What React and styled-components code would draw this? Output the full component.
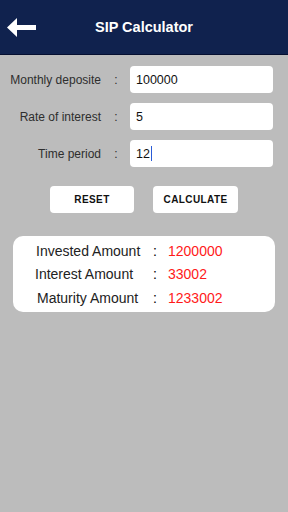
import React from 'react';
import styled, { createGlobalStyle } from 'styled-components';

const GlobalStyle = createGlobalStyle`
  html, body {
    margin: 0;
    padding: 0;
    background: #bcbcbc;
  }
  body {
    font-family: "Liberation Sans", Arial, sans-serif;
  }
`;

const Screen = styled.div`
  width: 288px;
  height: 512px;
  background: #bcbcbc;
  overflow: hidden;
`;

const Header = styled.div`
  height: 54px;
  background: #10224e;
  border-bottom: 1px solid #050f30;
  display: flex;
  align-items: center;
  position: relative;
`;

const BackButton = styled.div`
  width: 30px;
  height: 19px;
  margin-left: 7px;
  display: flex;
`;

const Title = styled.h1`
  position: absolute;
  left: 0;
  right: 0;
  margin: 0;
  text-align: center;
  color: #fff;
  font-size: 14.5px;
  font-weight: 700;
  pointer-events: none;
`;

const Form = styled.div`
  padding-top: 11px;
  display: flex;
  flex-direction: column;
  gap: 10px;
`;

const Row = styled.div`
  display: grid;
  grid-template-columns: 101px 29px 143px;
  align-items: center;
  height: 27px;
`;

const Label = styled.span`
  text-align: right;
  font-size: 12px;
  color: #2e2e2e;
`;

const Colon = styled.span`
  text-align: center;
  font-size: 12px;
  color: #2e2e2e;
  padding-left: 1px;
`;

const Field = styled.div`
  height: 27px;
  background: #fff;
  border-radius: 4px;
  display: flex;
  align-items: center;
  padding-left: 6px;
  font-size: 12.5px;
  color: #111;
  box-sizing: border-box;
`;

const Caret = styled.span`
  display: inline-block;
  width: 1px;
  height: 15px;
  background: #2a5bd7;
  margin-left: 1px;
`;

const Buttons = styled.div`
  display: flex;
  gap: 19px;
  padding-left: 50px;
  margin-top: 19px;
`;

const Button = styled.button`
  width: ${p => p.$w}px;
  height: 27px;
  background: #fff;
  border: none;
  border-radius: 4px;
  font-family: "Liberation Sans", Arial, sans-serif;
  font-weight: 700;
  font-size: 10px;
  letter-spacing: 0.4px;
  color: #111;
  padding: 0;
`;

const Card = styled.div`
  margin: 23px 13px 0 13px;
  height: 76px;
  background: #fff;
  border-radius: 10px;
  padding: 3px 0 0 22px;
  box-sizing: border-box;
  display: flex;
  flex-direction: column;
`;

const ResultRow = styled.div`
  display: grid;
  grid-template-columns: 118px 15px auto;
  height: 23.5px;
  align-items: center;
  font-size: 14px;
`;

const ResultLabel = styled.span`
  color: #222;
  padding-left: ${p => p.$shift || 0}px;
`;

const ResultValue = styled.span`
  color: #ff1a1a;
`;

const ArrowIcon = () => (
  <svg width="30" height="19" viewBox="0 0 30 19">
    <polygon points="0,9.5 10,0 10,7 29,7 29,12 10,12 10,19" fill="#fff" />
  </svg>
);

const fields = [
  { label: 'Monthly deposite', value: '100000' },
  { label: 'Rate of interest', value: '5' },
  { label: 'Time period', value: '12', focused: true },
];

const results = [
  { label: 'Invested Amount', value: '1200000', shift: 1 },
  { label: 'Interest Amount', value: '33002', shift: 0 },
  { label: 'Maturity Amount', value: '1233002', shift: 2 },
];

export default function App() {
  return (
    <Screen>
      <GlobalStyle />
      <Header>
        <BackButton>
          <ArrowIcon />
        </BackButton>
        <Title>SIP Calculator</Title>
      </Header>
      <Form>
        {fields.map((f, i) => (
          <Row key={i}>
            <Label>{f.label}</Label>
            <Colon>:</Colon>
            <Field>
              {f.value}
              {f.focused && <Caret />}
            </Field>
          </Row>
        ))}
      </Form>
      <Buttons>
        <Button $w={84}>RESET</Button>
        <Button $w={85}>CALCULATE</Button>
      </Buttons>
      <Card>
        {results.map((r, i) => (
          <ResultRow key={i}>
            <ResultLabel $shift={r.shift}>{r.label}</ResultLabel>
            <span>:</span>
            <ResultValue>{r.value}</ResultValue>
          </ResultRow>
        ))}
      </Card>
    </Screen>
  );
}
